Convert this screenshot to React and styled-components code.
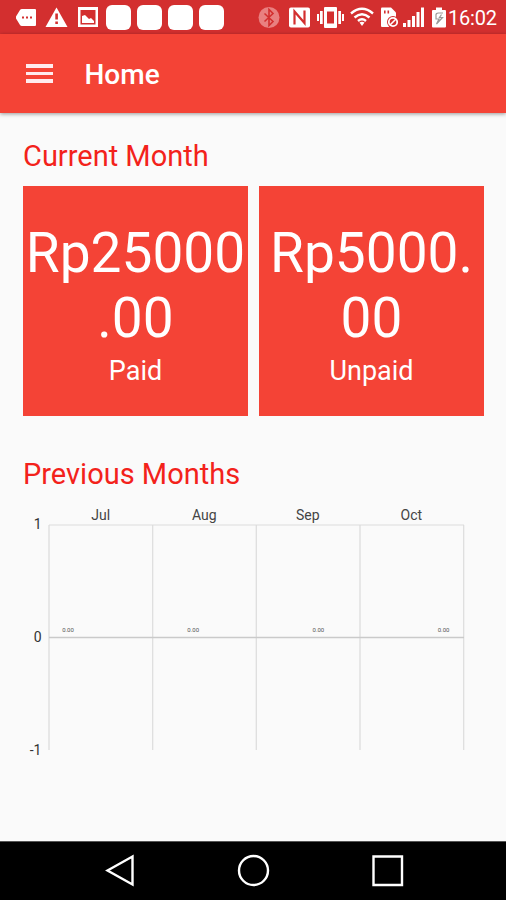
import React from "react";
import styled, { createGlobalStyle } from "styled-components";

const GlobalStyle = createGlobalStyle`
  body {
    margin: 0;
    background-color: #fafafa;
    font-family: Roboto, "Liberation Sans", sans-serif;
  }
`;

const Screen = styled.div`
  display: flex;
  flex-direction: column;
  width: 506px;
  height: 900px;
  overflow: hidden;
  background-color: #fafafa;
`;

const StatusBar = styled.div`
  display: flex;
  align-items: center;
  flex-shrink: 0;
  height: 34px;
  background-color: #d32f2f;
  color: #fff;
`;

const StatusIcon = styled.svg`
  flex-shrink: 0;
  display: block;
  width: ${(props) => props.$width}px;
  height: 34px;
  margin-left: ${(props) => props.$gap}px;
  fill: #fff;
`;

const AppBadge = styled.div`
  flex-shrink: 0;
  width: 25px;
  height: 25px;
  margin-left: ${(props) => props.$gap || 6}px;
  border-radius: 6px;
  background-color: #fff;
`;

const Clock = styled.span`
  margin-left: 2px;
  padding-top: 2px;
  font-size: 20px;
  line-height: 24px;
  letter-spacing: -0.2px;
`;

const Header = styled.header`
  display: flex;
  align-items: center;
  flex-shrink: 0;
  height: 79px;
  padding-left: 26px;
  background-color: #f44336;
  box-shadow: 0 1px 4px rgba(0, 0, 0, 0.4);
  color: #fff;
`;

const MenuButton = styled.button`
  display: flex;
  flex-direction: column;
  gap: 4px;
  width: 27px;
  padding: 0;
  border: none;
  background: none;
`;

const MenuLine = styled.span`
  height: 3.5px;
  background-color: #ffebee;
`;

const Title = styled.h1`
  margin: 2px 0 0 31.5px;
  font-size: 28px;
  font-weight: 500;
  line-height: 32px;
`;

const Content = styled.main`
  flex: 1;
  padding: 27px 22px 0 23px;
`;

const SectionTitle = styled.h2`
  margin: 0;
  color: #f3221b;
  font-size: 29px;
  font-weight: 400;
  line-height: 33px;
`;

const Cards = styled.div`
  display: grid;
  grid-template-columns: 1fr 1fr;
  gap: 11px;
  margin: 13px 0 42px;
`;

const Card = styled.div`
  box-sizing: border-box;
  height: 230px;
  padding-top: 35px;
  background-color: #f44336;
  color: #fff;
  text-align: center;
`;

const Amount = styled.div`
  font-size: 55px;
  line-height: 64.5px;
  line-break: anywhere;
`;

const Label = styled.div`
  margin-top: 5px;
  font-size: 27px;
  line-height: 33px;
`;

const ChartSvg = styled.svg`
  display: block;
  margin-top: 10px;
`;

const Month = styled.text`
  fill: #444;
  font-size: 14px;
  text-anchor: middle;
`;

const AxisLabel = styled.text`
  fill: #333;
  font-size: 14px;
  text-anchor: end;
`;

const ValueLabel = styled.text`
  fill: #555;
  font-size: 6px;
  text-anchor: middle;
`;

const NavBar = styled.nav`
  box-sizing: border-box;
  display: flex;
  align-items: center;
  flex-shrink: 0;
  gap: 98px;
  height: 59px;
  padding-left: 103px;
  border-top: 1px solid #555;
  background-color: #000;
`;

const NavIcon = styled.svg`
  width: 36px;
  height: 36px;
  fill: none;
  stroke: #fff;
  stroke-width: 2.4;
`;

const MONTHS = [
  { name: "Jul", value: "0.00" },
  { name: "Aug", value: "0.00" },
  { name: "Sep", value: "0.00" },
  { name: "Oct", value: "0.00" },
];

const SummaryCard = ({ amount, label }) => (
  <Card>
    <Amount>{amount}</Amount>
    <Label>{label}</Label>
  </Card>
);

const Status = () => (
  <StatusBar>
    <StatusIcon $width={20} $gap={16} viewBox="0 0 20 34">
      <path d="M6 9h13q1 0 1 1v15q0 1-1 1H6q-1.400 0-2-1L0 18.500v-2L4 10q.6-1 2-1z" />
      <path d="M6 16.500h2v2H6zm4 0h2v2h-2zm4 0h2v2h-2z" fill="#d32f2f" />
    </StatusIcon>
    <StatusIcon $width={23} $gap={9} viewBox="0 0 23 34">
      <path d="M11.500 7.500L22.500 27H.5z" />
      <path d="M10.300 13.500h2.600v6h-2.600zm0 8h2.600V24h-2.600z" fill="#d32f2f" />
    </StatusIcon>
    <StatusIcon $width={20} $gap={10} viewBox="0 0 20 34">
      <path d="M0 7h20v20H0zm2.500 3v14.500h15V10z" fillRule="evenodd" />
      <path d="M4 16l3-1 4 4 2-1 3 3v2H4z" />
    </StatusIcon>
    <AppBadge $gap={8} />
    <AppBadge />
    <AppBadge />
    <AppBadge />
    <StatusIcon $width={22} $gap={34} viewBox="0 0 22 34">
      <circle cx="11" cy="17.500" r="10.500" fill="#e98080" />
      <path d="M6.500 13.500l8.500 8-4 4v-16l4 4-8.500 8" fill="none" stroke="#d32f2f" strokeWidth="1.600" />
    </StatusIcon>
    <StatusIcon $width={21} $gap={9} viewBox="0 0 21 34">
      <rect y="7.500" width="21" height="20" rx="2" />
      <path d="M5.500 24.500v-13l10 11.500V10.500" fill="none" stroke="#d32f2f" strokeWidth="2.200" />
    </StatusIcon>
    <StatusIcon $width={27} $gap={7} viewBox="0 0 27 34">
      <path d="M8 7h11q1 0 1 1v19q0 1-1 1H8q-1 0-1-1V8q0-1 1-1zm2 4.500v12h7v-12z" fillRule="evenodd" />
      <path d="M3 11h2.700v13H3zM0 14h2v7H0zM21.300 11H24v13h-2.700zM25 14h2v7h-2z" />
    </StatusIcon>
    <StatusIcon $width={24} $gap={6} viewBox="0 0 24 34">
      <path
        d="M1 13.500q11-9.500 22 0M4.500 17.500q7.500-6.500 15 0M8 21q4-3.500 8 0"
        fill="none"
        stroke="#fff"
        strokeWidth="2.400"
      />
      <path d="M9.500 22.500q2.500-1.600 5 0L12 26z" />
    </StatusIcon>
    <StatusIcon $width={18} $gap={7} viewBox="0 0 18 34">
      <path d="M1 7.500h9l5 5V27H1q-1 0-1-1V8.500q0-1 1-1z" />
      <path d="M3 10.500h1.600v3H3zm3.500 0h1.600v3H6.500z" fill="#d32f2f" />
      <circle cx="12" cy="22" r="6" fill="#d32f2f" />
      <circle cx="12" cy="22" r="4.200" fill="none" stroke="#fff" strokeWidth="1.800" />
      <path d="M9 25l6-6" stroke="#fff" strokeWidth="1.600" />
    </StatusIcon>
    <StatusIcon $width={21} $gap={4} viewBox="0 0 21 34">
      <path d="M0 23h3v4H0zM4.500 20h3v7h-3zM9 16h3v11H9zM13.500 12h3v15h-3zM18 7.500h3V27h-3z" />
    </StatusIcon>
    <StatusIcon $width={14} $gap={8} viewBox="0 0 14 34">
      <path d="M4 7.500h6V10h3q1 0 1 1v15.500q0 1-1 1H1q-1 0-1-1V11q0-1 1-1h3z" />
      <path
        d="M11 13H6.500q-3 0-2.500 3v3h3l-2.500 5 6-6.500h-3l2-3"
        fill="none"
        stroke="#999"
        strokeWidth="1.200"
      />
    </StatusIcon>
    <Clock>16:02</Clock>
  </StatusBar>
);

const Chart = ({ months }) => (
  <ChartSvg width="461" height="260" viewBox="0 0 461 260">
    {[26, 129.700, 233.300, 337, 440.700].map((x) => (
      <path key={x} d={`M${x} 24V249`} stroke="#dedede" strokeWidth="1.300" />
    ))}
    <path d="M26 24h415" stroke="#dcdcdc" />
    <path d="M26 136.500h415" stroke="#cacaca" strokeWidth="1.500" />
    <AxisLabel x="18.500" y="28">1</AxisLabel>
    <AxisLabel x="18.500" y="141">0</AxisLabel>
    <AxisLabel x="18.500" y="253.500">-1</AxisLabel>
    {months.map((month, i) => (
      <React.Fragment key={month.name}>
        <Month x={77.800 + i * 103.500} y="18.500">{month.name}</Month>
        <ValueLabel x={45 + i * 125.200} y="130.500">{month.value}</ValueLabel>
      </React.Fragment>
    ))}
  </ChartSvg>
);

const App = () => {
  return (
    <Screen>
      <GlobalStyle />
      <Status />
      <Header>
        <MenuButton aria-label="Menu">
          <MenuLine />
          <MenuLine />
          <MenuLine />
        </MenuButton>
        <Title>Home</Title>
      </Header>
      <Content>
        <SectionTitle>Current Month</SectionTitle>
        <Cards>
          <SummaryCard amount="Rp25000.00" label="Paid" />
          <SummaryCard amount="Rp5000.00" label="Unpaid" />
        </Cards>
        <SectionTitle>Previous Months</SectionTitle>
        <Chart months={MONTHS} />
      </Content>
      <NavBar>
        <NavIcon viewBox="0 0 36 36">
          <path d="M4.500 17.500L29.500 3.500v28z" />
        </NavIcon>
        <NavIcon viewBox="0 0 36 36">
          <circle cx="16.500" cy="17.500" r="14.500" />
        </NavIcon>
        <NavIcon viewBox="0 0 36 36">
          <path d="M2.500 3.500h28.500v28.500H2.500z" />
        </NavIcon>
      </NavBar>
    </Screen>
  );
};

export default App;
